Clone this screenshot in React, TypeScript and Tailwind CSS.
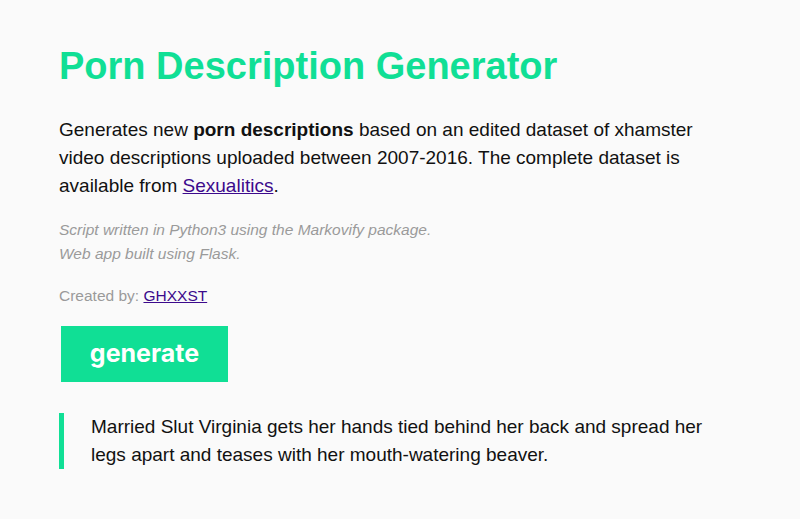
export default function App() {
  return (
    <div className="min-h-screen bg-[#fafafa] text-[#111] font-['Liberation_Sans',Arial,sans-serif]">
      <div className="px-[59px] pt-[38px]">
        <h1 className="text-[38px] font-bold leading-[56px] text-[#10df95]">
          Porn Description Generator
        </h1>
        <p className="mt-[22px] text-[19px] leading-[28px] max-w-[680px]">
          Generates new <b>porn descriptions</b> based on an edited dataset of xhamster video
          descriptions uploaded between 2007-2016. The complete dataset is available from{" "}
          <a href="#" className="text-[#3c0a8c] underline">
            Sexualitics
          </a>
          .
        </p>
        <p className="mt-[18px] text-[15.5px] leading-[24px] italic text-[#9a9a9a]">
          Script written in Python3 using the Markovify package.
          <br />
          Web app built using Flask.
        </p>
        <p className="mt-[18px] text-[15.5px] leading-[24px] text-[#9a9a9a]">
          Created by:{" "}
          <a href="#" className="text-[#3c0a8c] underline">
            GHXXST
          </a>
        </p>
        <button className="mt-[18px] ml-[2px] w-[167px] h-[56px] bg-[#10df95] text-white text-[25px] font-bold font-['Inter',sans-serif]">
          generate
        </button>
        <div className="mt-[31px] border-l-[5px] border-[#10df95] pl-[27px] text-[19px] leading-[28px] max-w-[660px]">
          Married Slut Virginia gets her hands tied behind her back and spread her legs apart and
          teases with her mouth-watering beaver.
        </div>
      </div>
    </div>
  );
}
